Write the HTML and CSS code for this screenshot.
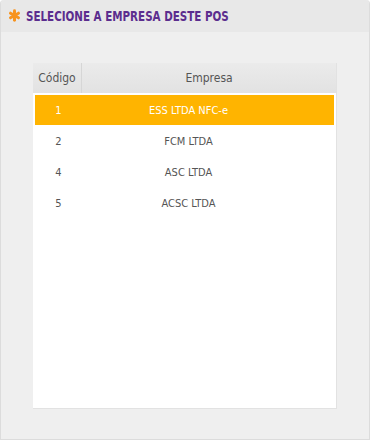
FILE: index.html
```html
<!DOCTYPE html>
<html lang="pt-BR">
<head>
  <meta charset="UTF-8">
  <title>Selecione a empresa deste POS</title>
  <link rel="stylesheet" href="styles.css">
</head>
<body>
  <div class="panel">
    <div class="panel-header">
      <svg class="icon" width="13" height="13" viewBox="0 0 14 14">
        <g stroke="#f7931e" stroke-width="3.2" stroke-linecap="round">
          <line x1="7" y1="2" x2="7" y2="12" />
          <line x1="2.7" y1="4.5" x2="11.3" y2="9.5" />
          <line x1="2.7" y1="9.5" x2="11.3" y2="4.5" />
        </g>
      </svg>
      <span class="title">SELECIONE A EMPRESA DESTE POS</span>
    </div>

    <div class="panel-body">
      <div class="grid-box">
        <div class="grid-head">
          <div class="col-cod">Código</div>
          <div class="col-emp">Empresa</div>
        </div>
        <div class="grid-rows">
          <div class="row selected">
            <div class="col-cod">1</div>
            <div class="col-emp">ESS LTDA NFC-e</div>
          </div>
          <div class="row">
            <div class="col-cod">2</div>
            <div class="col-emp">FCM LTDA</div>
          </div>
          <div class="row">
            <div class="col-cod">4</div>
            <div class="col-emp">ASC LTDA</div>
          </div>
          <div class="row">
            <div class="col-cod">5</div>
            <div class="col-emp">ACSC LTDA</div>
          </div>
        </div>
      </div>
    </div>
  </div>
</body>
</html>
```

FILE: styles.css
```css
/* === Cores === */
:root {
  --cor-titulo: #5b2d8e;
  --cor-selecao: #ffb400;
  --cor-texto: #555555;
  --cor-topo: #e8e8e8;
  --cor-fundo: #efefef;
}

* {
  box-sizing: border-box;
  margin: 0;
  padding: 0;
}
body {
  font-family: "DejaVu Sans Condensed", "DejaVu Sans", sans-serif;
  background: #ffffff;
  color: var(--cor-texto);
}

/* === Painel === */
.panel {
  width: 370px;
  height: 440px;
  display: flex;
  flex-direction: column;
  background: var(--cor-fundo);
  border: 1px solid #dcdcdc;
  border-top: none;
  border-radius: 4px 4px 0 0;
}
.panel-header {
  height: 32px;
  display: flex;
  align-items: center;
  gap: 5px;
  padding: 0 0 1px 7px;
  background: var(--cor-topo);
  border-radius: 4px 4px 0 0;
}
/* fonte condensada da marca nao existe aqui: aperta a DejaVu */
.title {
  display: inline-block;
  color: var(--cor-titulo);
  font-size: 14px;
  font-weight: bold;
  white-space: nowrap;
  transform: scaleX(0.82);
  transform-origin: left center;
}

.panel-body {
  flex: 1;
  padding: 31px 32px 30px 32px;
}

/* === Grade === */
.grid-box {
  height: 100%;
  background: #ffffff;
  border-right: 1px solid #e2e2e2;
  border-bottom: 1px solid #e2e2e2;
  font-size: 11px;
}
.grid-head {
  display: grid;
  grid-template-columns: 49px 1fr;
  height: 30px;
  background: linear-gradient(#ebebeb, #e2e2e2);
  font-size: 12px;
}
.grid-head > div {
  display: flex;
  align-items: center;
  justify-content: center;
}
.grid-head .col-cod {
  border-right: 1px solid #d6d6d6;
}
.grid-rows {
  padding: 2px;
}
.row {
  display: grid;
  grid-template-columns: 47px 213px;
  height: 31px;
  align-items: center;
  text-align: center;
}
.row.selected {
  background: var(--cor-selecao);
  color: #ffffff;
  height: 30px;
  margin-bottom: 1px;
}
```
